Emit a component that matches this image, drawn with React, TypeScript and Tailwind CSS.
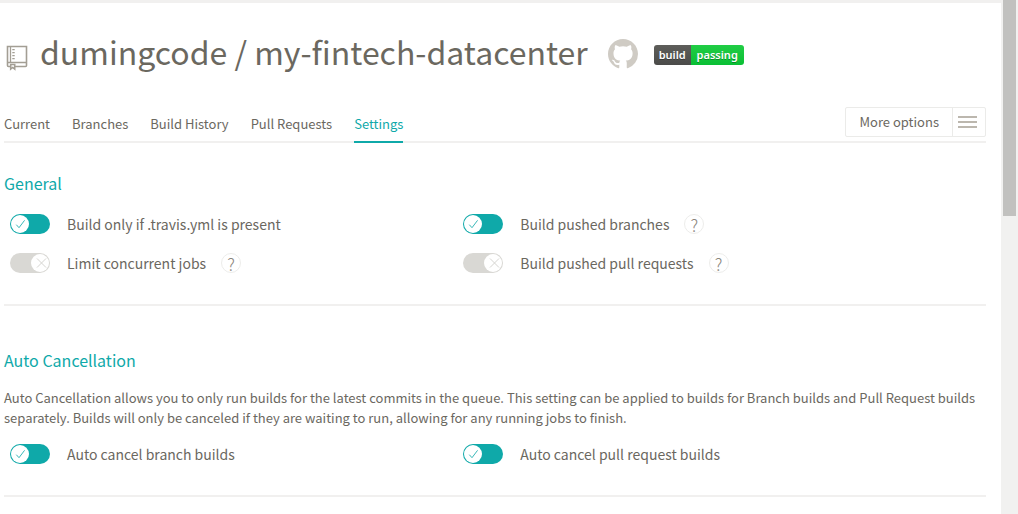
function RepoIcon() {
  return (
    <svg
      className="mt-2 h-7 w-6 shrink-0"
      viewBox="0 0 24 28"
      fill="none"
      stroke="#a39e94"
      aria-hidden="true"
    >
      <path d="M11 22.5h10.5a1 1 0 0 0 1-1V2.5H3.5v19a1 1 0 0 0 1 1H6" strokeWidth="1.6" />
      <path d="M3.5 18.5h19M6.5 2.5v16" strokeWidth="1.3" />
      <path d="M9.5 5v11" strokeWidth="2.4" strokeDasharray="1.2 1.8" />
      <path d="M6.7 20.5h4v4.6l-2-1.6-2 1.6z" strokeWidth="1.6" />
    </svg>
  );
}

function GithubMark() {
  return (
    <svg className="size-[30px]" viewBox="0 0 16 16" fill="currentColor" aria-hidden="true">
      <path d="M8 0C3.58 0 0 3.58 0 8c0 3.54 2.29 6.53 5.47 7.59.4.07.55-.17.55-.38 0-.19-.01-.82-.01-1.49-2.01.37-2.53-.49-2.69-.94-.09-.23-.48-.94-.82-1.13-.28-.15-.68-.52-.01-.53.63-.01 1.08.58 1.23.82.72 1.21 1.87.87 2.33.66.07-.52.28-.87.51-1.07-1.78-.2-3.64-.89-3.64-3.95 0-.87.31-1.59.82-2.15-.08-.2-.36-1.02.08-2.12 0 0 .67-.21 2.2.82.64-.18 1.32-.27 2-.27.68 0 1.36.09 2 .27 1.53-1.04 2.2-.82 2.2-.82.44 1.1.16 1.92.08 2.12.51.56.82 1.27.82 2.15 0 3.07-1.87 3.75-3.65 3.95.29.25.54.73.54 1.48 0 1.07-.01 1.93-.01 2.2 0 .21.15.46.55.38A8.013 8.013 0 0 0 16 8c0-4.42-3.58-8-8-8z" />
    </svg>
  );
}

function Switch({ id, on }: { id: string; on: boolean }) {
  return (
    <span className="grid h-5 w-10 shrink-0 items-center">
      <input
        id={id}
        type="checkbox"
        role="switch"
        defaultChecked={on}
        className="peer col-start-1 row-start-1 h-5 w-10 cursor-pointer appearance-none rounded-full bg-[#d9d8d4] checked:bg-[#0fa9a9]"
      />
      <svg
        className="pointer-events-none col-start-1 row-start-1 hidden h-5 w-5 peer-checked:block"
        viewBox="0 0 20 20"
        fill="none"
        aria-hidden="true"
      >
        <circle cx="10" cy="10" r="9" fill="#fff" />
        <path d="M6.3 10.7l2.7 3 5.6-7.4" stroke="#39b8b8" />
      </svg>
      <svg
        className="pointer-events-none col-start-1 row-start-1 h-5 w-5 justify-self-end peer-checked:hidden"
        viewBox="0 0 20 20"
        fill="none"
        aria-hidden="true"
      >
        <circle cx="10" cy="10" r="9" fill="#fff" />
        <path d="M7 5.5l9 9M16 5.5l-9 9" stroke="#d6d5d1" />
      </svg>
    </span>
  );
}

function Setting({ id, label, on, help }: { id: string; label: string; on: boolean; help?: boolean }) {
  return (
    <div className="flex h-5 items-center pl-1.5">
      <Switch id={id} on={on} />
      <label htmlFor={id} className="pl-[17px] text-[14px] leading-5">
        {label}
      </label>
      {help && (
        <button
          type="button"
          aria-label={`Help: ${label}`}
          className="ml-[15px] flex h-5 w-5 items-center justify-center rounded-full border border-[#ededeb] text-[17px] leading-none font-light text-[#8a857c]"
        >
          ?
        </button>
      )}
    </div>
  );
}

const tabs = ["Current", "Branches", "Build History", "Pull Requests", "Settings"];

export default function App() {
  return (
    <div className="flex h-screen overflow-hidden bg-white font-['Noto_Sans_CJK_SC',sans-serif] text-[#6b685f]">
      <main className="min-w-0 flex-1 border-t-3 border-[#f1f0ef] pr-[15px] pl-1">
        <header className="flex h-[102px] items-center">
          <RepoIcon />
          <h1 className="pb-1.5 pl-3 text-[32px] leading-10 whitespace-nowrap">dumingcode / my-fintech-datacenter</h1>
          <a href="#github" aria-label="View on GitHub" className="ml-5 text-[#cfcbc4]">
            <GithubMark />
          </a>
          <a
            href="#badge"
            className="mt-0.5 ml-4 flex h-5 overflow-hidden rounded-[3px] font-['Noto_Sans',sans-serif] text-[11px] leading-5 font-semibold text-white text-shadow-[0_1px_0_#0000004d]"
          >
            <span className="w-[37px] bg-linear-to-b from-[#5e5e5a] to-[#4b4b49] text-center">build</span>
            <span className="w-[53px] bg-linear-to-b from-[#20cd45] to-[#08bf34] text-center">passing</span>
          </a>
        </header>

        <div className="flex items-end justify-between border-b-2 border-[#f1f0ef]">
          <nav className="-mb-0.5 flex gap-[22px] text-[13px] leading-5">
            {tabs.map((t) => (
              <a
                key={t}
                href="#tab"
                aria-current={t === "Settings" ? "page" : undefined}
                className="border-b-2 border-transparent pb-[7px] aria-[current=page]:border-[#0fa9a9] aria-[current=page]:text-[#0fa9a9]"
              >
                {t}
              </a>
            ))}
          </nav>
          <button
            type="button"
            className="mt-0.5 mb-1 flex h-[30px] items-center rounded-xs border border-[#ebebe9] text-[13px]"
          >
            <span className="px-[13px] leading-7">More options</span>
            <span className="flex h-7 w-[33px] items-center border-l border-[#ebebe9] pl-[5px]">
              <svg className="h-3 w-[19px]" viewBox="0 0 19 12" stroke="#bcb7ae" strokeWidth="2" aria-hidden="true">
                <path d="M0 1h19M0 6h19M0 11h19" />
              </svg>
            </span>
          </button>
        </div>

        <section className="border-b-2 border-[#f1f0ef] pt-7 pb-[31px]">
          <h2 className="text-[16px] leading-6 text-[#0fa9a9]">General</h2>
          <div className="grid grid-cols-[6fr_7fr] gap-y-[19px] pt-[19px]">
            <Setting id="travis" label="Build only if .travis.yml is present" on />
            <Setting id="branches" label="Build pushed branches" on help />
            <Setting id="limit" label="Limit concurrent jobs" on={false} help />
            <Setting id="pulls" label="Build pushed pull requests" on={false} help />
          </div>
        </section>

        <section className="border-b-2 border-[#f1f0ef] pt-[42px] pb-[31px]">
          <h2 className="text-[16px] leading-6 text-[#0fa9a9]">Auto Cancellation</h2>
          <p className="pt-4 text-[13px] leading-5">
            Auto Cancellation allows you to only run builds for the latest commits in the queue. This setting can be
            applied to builds for Branch builds and Pull Request builds separately. Builds will only be canceled if they
            are waiting to run, allowing for any running jobs to finish.
          </p>
          <div className="grid grid-cols-[6fr_7fr] pt-4">
            <Setting id="cancel-branch" label="Auto cancel branch builds" on />
            <Setting id="cancel-pull" label="Auto cancel pull request builds" on />
          </div>
        </section>
      </main>
      <div className="w-[17px] shrink-0 bg-[#f1f1f0] px-0.5" aria-hidden="true">
        <div className="h-[42%] bg-[#c1c1bf]" />
      </div>
    </div>
  );
}
